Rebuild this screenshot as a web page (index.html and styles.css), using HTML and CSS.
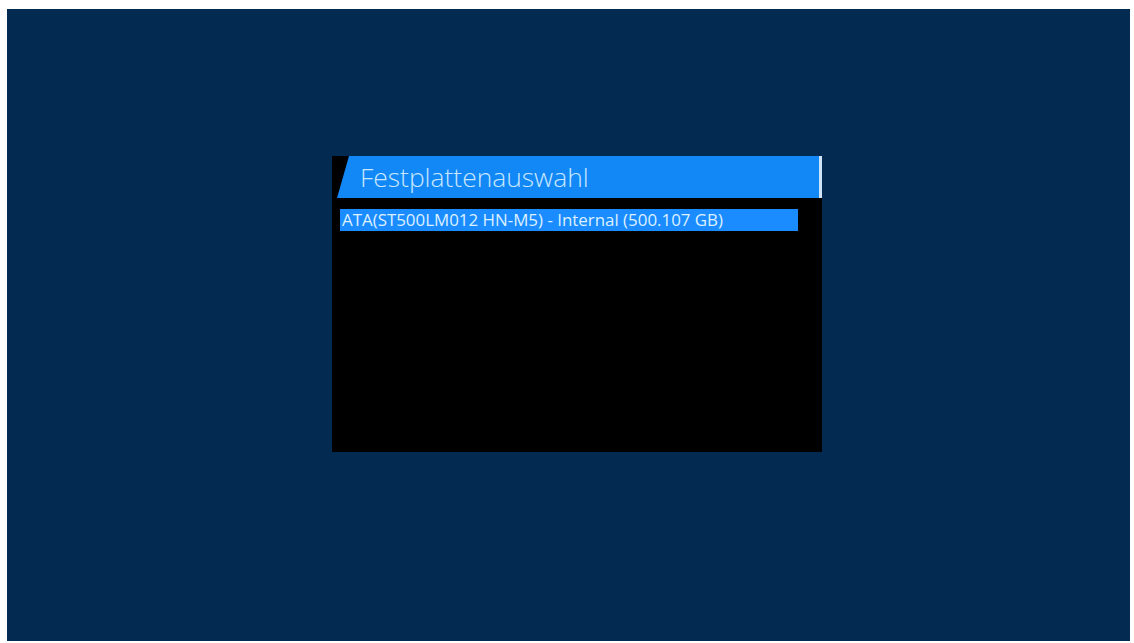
FILE: index.html
```html
<!DOCTYPE html>
<html>
<head>
<meta charset="utf-8">
<link rel="stylesheet" href="styles.css">
</head>
<body>
<div class="screen">
  <div class="dialog">
    <div class="header"><span class="title">Festplattenauswahl</span></div>
    <div class="list">
      <div class="row selected">ATA(ST500LM012 HN-M5) - Internal (500.107 GB)</div>
    </div>
  </div>
</div>
</body>
</html>
```
FILE: styles.css
```css
html, body {
  margin: 0;
  padding: 0;
  background: #ffffff;
}
body {
  width: 1134px;
  height: 643px;
  overflow: hidden;
  font-family: "Open Sans", "Noto Sans", sans-serif;
}
.screen {
  margin: 9px 0 0 7px;
  width: 1123px;
  height: 632px;
  background: #032a50;
  box-sizing: border-box;
  padding: 147px 0 0 325px;
}
.dialog {
  width: 490px;
  height: 296px;
  background: #000000;
  display: flex;
  flex-direction: column;
}
.header {
  margin-left: 5px;
  height: 42px;
  background: #1188f5;
  clip-path: polygon(12px 0, 100% 0, 100% 100%, 0 100%);
  border-right: 3px solid #cfe3f7;
  box-sizing: border-box;
  display: flex;
  align-items: center;
  padding-left: 23px;
}
.title {
  color: #c8e6ff;
  font-weight: 300;
  font-size: 26.4px;
  line-height: 1;
  margin-top: 1px;
}
.list {
  margin: 11px 0 0 8px;
}
.row {
  width: 458px;
  height: 22px;
  box-sizing: border-box;
  padding-left: 2px;
  color: #dcf0ff;
  font-size: 16.9px;
  line-height: 22px;
  white-space: nowrap;
}
.selected {
  background: #1a8cff;
}
```
